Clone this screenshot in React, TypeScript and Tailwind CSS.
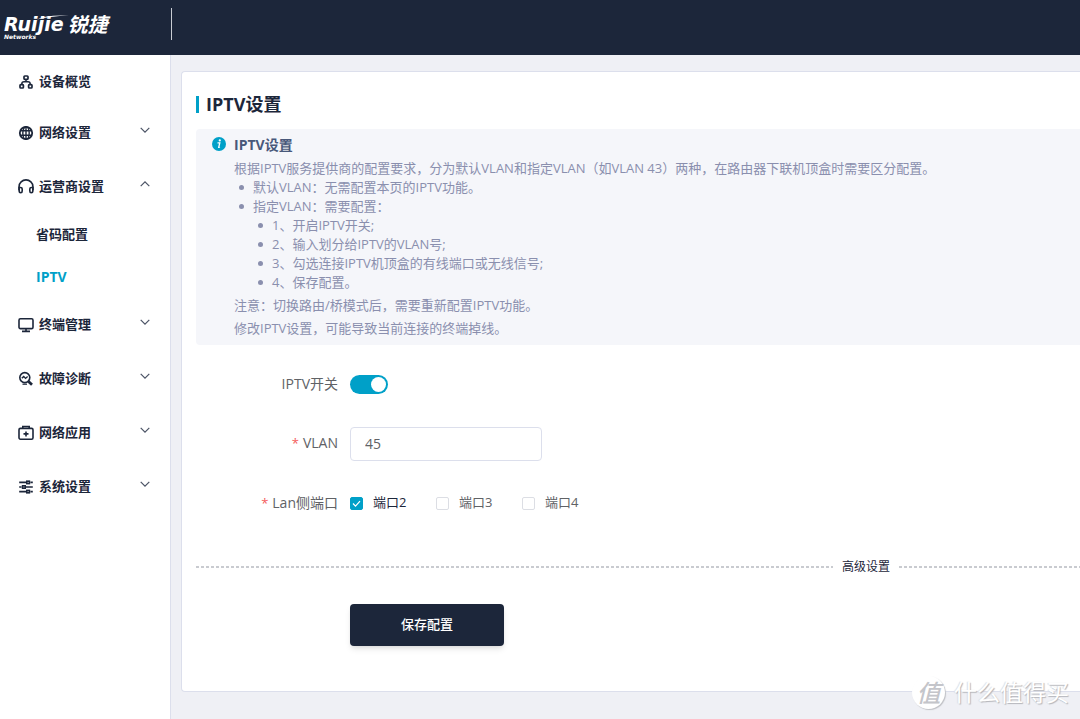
import { useState, type ReactNode } from 'react';

const iconProps = {
  viewBox: '0 0 16 16',
  fill: 'none',
  stroke: 'currentColor',
  strokeWidth: 1.5,
  'aria-hidden': true,
} as const;

const TopologyIcon = () => (
  <svg {...iconProps} className="size-4">
    <rect x="6" y="2" width="4" height="3.4" rx=".8" strokeWidth="1.7" />
    <rect x="2" y="10.6" width="3.4" height="3.4" rx=".8" strokeWidth="1.7" />
    <rect x="10.6" y="10.6" width="3.4" height="3.4" rx=".8" strokeWidth="1.7" />
    <path d="M8 5.3v2.5M3.8 10.5V10Q3.800 7.800 6 7.800h4q2.200 0 2.200 2.200v.5" />
  </svg>
);

const GlobeIcon = () => (
  <svg {...iconProps} strokeWidth={1.4} className="size-4">
    <circle cx="8" cy="8" r="6.2" strokeWidth="1.8" />
    <ellipse cx="8" cy="8" rx="3.2" ry="6.2" />
    <path d="M8 1.8v12.4M2.2 5.8h11.6M2.2 10.2h11.6" />
  </svg>
);

const HeadsetIcon = () => (
  <svg {...iconProps} strokeWidth={1.6} className="size-4">
    <path d="M1.1 11V7.500a6.900 6.600 0 0 1 13.800 0V11" />
    <path d="M1.100 8.500h1.400q1.700 0 1.700 1.600v1.800q0 1.800-1.500 1.800t-1.600-1.800zM14.900 8.500h-1.400q-1.700 0-1.700 1.600v1.800q0 1.800 1.500 1.800t1.600-1.800z" />
  </svg>
);

const MonitorIcon = () => (
  <svg {...iconProps} strokeWidth={1.6} className="size-4">
    <rect x="1" y="1.8" width="14" height="9.8" rx="1.4" />
    <path d="M8 11.6v2.6M4 14.4h8" />
  </svg>
);

const DiagnoseIcon = () => (
  <svg {...iconProps} strokeWidth={1.6} className="size-4">
    <circle cx="6.8" cy="6.6" r="5" />
    <path d="M3.800 7.300 5.700 5.500l1.900 1.900 2-1.800" strokeWidth="1.4" />
    <path d="m10.500 10.500 3.500 3.300" strokeWidth="2.8" />
    <path d="M4.500 13.200h4.500" strokeWidth="1.2" />
  </svg>
);

const KitIcon = () => (
  <svg {...iconProps} strokeWidth={1.6} className="size-4">
    <rect x="1" y="3.4" width="14" height="10.8" rx="1.4" />
    <path d="M4.8 3.2V1.500h6.400v1.700M8 6.400v5M5.500 8.900h5" />
  </svg>
);

const SlidersIcon = () => (
  <svg {...iconProps} strokeWidth={1.6} className="size-4">
    <path d="M1.2 3.4h7.2m4 0h2.4M1.2 8h2.4m4 0h7.2M1.2 12.6h7.2m4 0h2.4" />
    <rect x="8.8" y="2.2" width="2.6" height="2.4" />
    <rect x="4.6" y="6.8" width="2.6" height="2.4" />
    <rect x="8.8" y="11.4" width="2.6" height="2.4" />
  </svg>
);

const Chevron = ({ open }: { open?: boolean }) => (
  <svg viewBox="0 0 10 6" fill="none" stroke="currentColor" strokeWidth="1.2" aria-hidden className="mb-[6px] h-[6px] w-[10px] text-[#4b5365]">
    <path d={open ? 'M.7 5.2 5 .9l4.3 4.3' : 'M.7.8 5 5.1 9.3.8'} />
  </svg>
);

function MenuRow({ icon, label, open }: { icon: ReactNode; label: string; open?: boolean }) {
  return (
    <button type="button" aria-expanded={!!open} className="flex h-[54px] w-full items-center pt-px pr-5 pl-[18px]">
      {icon}
      <span className="ml-[5px] flex-1 text-left">{label}</span>
      <Chevron open={open} />
    </button>
  );
}

function Bullet({ children }: { children: ReactNode }) {
  return (
    <li className="relative pl-[19px] before:absolute before:top-[7px] before:left-[5px] before:size-[5px] before:rounded-full before:bg-[#8a8fae]">
      {children}
    </li>
  );
}

function FormRow({ label, htmlFor, required, children }: { label: string; htmlFor?: string; required?: boolean; children: ReactNode }) {
  const content = (
    <>
      {required && <span className="mr-1 text-[13px] text-[#f45b5b]">*</span>}
      {label}
    </>
  );
  const style = 'w-[142px] pb-[2px] text-right text-[14px]';
  return (
    <div className="flex h-[34px] items-center gap-3" role={htmlFor ? undefined : 'group'} aria-label={htmlFor ? undefined : label}>
      {htmlFor ? <label htmlFor={htmlFor} className={style}>{content}</label> : <span className={style}>{content}</span>}
      {children}
    </div>
  );
}

const dashes = 'h-[2px] bg-[repeating-linear-gradient(90deg,#c9cbd0_0_3px,transparent_3px_5px)]';

export default function App() {
  const [enabled, setEnabled] = useState(true);
  const [vlan, setVlan] = useState('45');
  const [ports, setPorts] = useState<number[]>([2]);
  const toggle = (p: number) => setPorts(ports.includes(p) ? ports.filter((x) => x !== p) : [...ports, p]);

  return (
    <div className="flex min-h-screen flex-col overflow-hidden bg-[#eff0f5] font-['Open_Sans','Noto_Sans_CJK_SC',sans-serif] text-[13px] text-[#606266]">
      <header className="flex h-[55px] shrink-0 items-start bg-[#1c263a] text-white">
        <a href="#home" className="relative flex w-[171px] items-start gap-1 pt-4 pl-1 whitespace-nowrap">
          <span className="flex flex-col">
            <span className="font-['DejaVu_Sans',sans-serif] text-[19px] leading-[17px] font-bold italic">Ruijie</span>
            <span className="font-['DejaVu_Sans',sans-serif] text-[6px] leading-[7px] font-bold italic">Networks</span>
          </span>
          <span className="text-[20px] leading-[18px] font-bold italic">锐捷</span>
          <svg viewBox="0 0 32 5" className="absolute top-[15px] left-[37px] h-[5px] w-8" aria-hidden>
            <path d="M0 4.500Q9-.5 32 .6 12 1.600 0 4.500Z" fill="#fff" />
          </svg>
        </a>
        <span className="mt-2 h-8 w-px bg-[#c9ccd3]" />
      </header>

      <div className="flex flex-1">
        <nav className="w-[171px] shrink-0 border-r border-[#dcdfec] bg-white text-[#1c263a]">
          <ul className="font-bold">
            <li>
              <a href="#overview" className="flex h-[50px] items-center pt-1 pl-[18px]">
                <TopologyIcon />
                <span className="ml-[5px]">设备概览</span>
              </a>
            </li>
            <li><MenuRow icon={<GlobeIcon />} label="网络设置" /></li>
            <li>
              <MenuRow icon={<HeadsetIcon />} label="运营商设置" open />
              <ul>
                <li><a href="#code" className="flex h-[42px] items-center pt-px pl-9">省码配置</a></li>
                <li><a href="#iptv" aria-current="page" className="flex h-[42px] items-center pl-9 text-[14px] text-[#00a0c8]">IPTV</a></li>
              </ul>
            </li>
            <li><MenuRow icon={<MonitorIcon />} label="终端管理" /></li>
            <li><MenuRow icon={<DiagnoseIcon />} label="故障诊断" /></li>
            <li><MenuRow icon={<KitIcon />} label="网络应用" /></li>
            <li><MenuRow icon={<SlidersIcon />} label="系统设置" /></li>
          </ul>
        </nav>

        <main className="min-w-0 flex-1 pt-4 pb-[27px] pl-[10px]">
          <section className="h-full rounded-l border border-r-0 border-[#dcdfec] bg-white pt-5 pl-[14px]">
            <h1 className="flex h-6 items-center gap-[7px] text-[18px] font-bold text-[#1c263a]">
              <span className="h-[17px] w-[3px] bg-[#00a0c8]" />
              IPTV设置
            </h1>

            <div className="mt-[13px] flex gap-2 rounded-l bg-[#f5f6fa] pt-[6px] pb-[5px] pl-4 text-[#8a8fae]">
              <svg viewBox="0 0 14 14" className="mt-[2px] size-[14px] shrink-0" aria-hidden>
                <circle cx="7" cy="7" r="7" fill="#00a0c8" />
                <circle cx="7.8" cy="3.4" r="1.1" fill="#fff" />
                <path d="M5.500 5.900h2.300L6.700 10.300q.4.200 1.200-.3" stroke="#fff" strokeWidth="1.3" fill="none" />
              </svg>
              <div className="leading-[19px]">
                <h2 className="mb-1 text-[14px] leading-5 font-bold text-[#48587a]">IPTV设置</h2>
                <p>根据IPTV服务提供商的配置要求，分为默认VLAN和指定VLAN（如VLAN 43）两种，在路由器下联机顶盒时需要区分配置。</p>
                <ul>
                  <Bullet>默认VLAN：无需配置本页的IPTV功能。</Bullet>
                  <Bullet>
                    指定VLAN：需要配置：
                    <ul>
                      <Bullet>1、开启IPTV开关;</Bullet>
                      <Bullet>2、输入划分给IPTV的VLAN号;</Bullet>
                      <Bullet>3、勾选连接IPTV机顶盒的有线端口或无线信号;</Bullet>
                      <Bullet>4、保存配置。</Bullet>
                    </ul>
                  </Bullet>
                </ul>
                <p className="mt-[2px] leading-[23px]">注意：切换路由/桥模式后，需要重新配置IPTV功能。</p>
                <p className="leading-[23px]">修改IPTV设置，可能导致当前连接的终端掉线。</p>
              </div>
            </div>

            <form onSubmit={(e) => e.preventDefault()} className="pt-[22px]">
              <div className="flex flex-col gap-[26px]">
                <FormRow label="IPTV开关" htmlFor="iptv-switch">
                  <input
                    id="iptv-switch"
                    type="checkbox"
                    role="switch"
                    checked={enabled}
                    onChange={() => setEnabled(!enabled)}
                    className="relative h-[19px] w-[38px] appearance-none rounded-full bg-[#c0c4cc] before:absolute before:top-[2px] before:left-[2px] before:size-[15px] before:rounded-full before:bg-white checked:bg-[#00a0c8] checked:before:left-[21px]"
                  />
                </FormRow>
                <FormRow label="VLAN" htmlFor="vlan" required>
                  <input
                    id="vlan"
                    value={vlan}
                    onChange={(e) => setVlan(e.target.value)}
                    className="h-[34px] w-[192px] rounded border border-[#dcdfec] bg-white px-[14px] pb-[2px] text-[14px] outline-none"
                  />
                </FormRow>
                <FormRow label="Lan侧端口" required>
                  <div className="flex pb-[2px]">
                    {[2, 3, 4].map((p) => (
                      <label key={p} className={ports.includes(p) ? 'flex w-[86px] items-center gap-[10px] text-[#1c263a]' : 'flex w-[86px] items-center gap-[10px]'}>
                        <span className="grid size-[13px] place-items-center">
                          <input
                            type="checkbox"
                            checked={ports.includes(p)}
                            onChange={() => toggle(p)}
                            className="col-start-1 row-start-1 size-[13px] appearance-none rounded-[2px] border border-[#dcdee4] bg-white checked:border-[#00a0c8] checked:bg-[#00a0c8]"
                          />
                          {ports.includes(p) && (
                            <svg viewBox="0 0 13 13" fill="none" stroke="#fff" strokeWidth="1.2" className="pointer-events-none z-10 col-start-1 row-start-1 size-[13px]" aria-hidden>
                              <path d="m3 6.500 2.500 2.700L10 4.200" />
                            </svg>
                          )}
                        </span>
                        端口{p}
                      </label>
                    ))}
                  </div>
                </FormRow>
              </div>

              <div className="mt-9 flex h-5 items-center gap-[9px] text-[12px] text-[#1c263a]">
                <span className={`flex-1 ${dashes}`} />
                <button type="button">高级设置</button>
                <span className={`w-[181px] ${dashes}`} />
              </div>

              <button type="submit" className="mt-[27px] mb-[45px] ml-[154px] h-[42px] w-[154px] rounded bg-[#1c263a] font-medium text-white shadow-md">
                保存配置
              </button>
            </form>
          </section>
        </main>
      </div>

      <div className="pointer-events-none absolute right-[11px] bottom-[10px] flex items-center gap-[9px] text-white">
        <span className="grid size-[33px] place-items-center rounded-full bg-white text-[24px] leading-none font-medium text-[#c4c5ca] italic shadow-[1px_1px_1px_#bfc0c5]">值</span>
        <span className="text-[23px] leading-[33px] [text-shadow:1px_1px_1px_#b4b5ba,-1px_0_1px_#dcdde0]">什么值得买</span>
      </div>
    </div>
  );
}
